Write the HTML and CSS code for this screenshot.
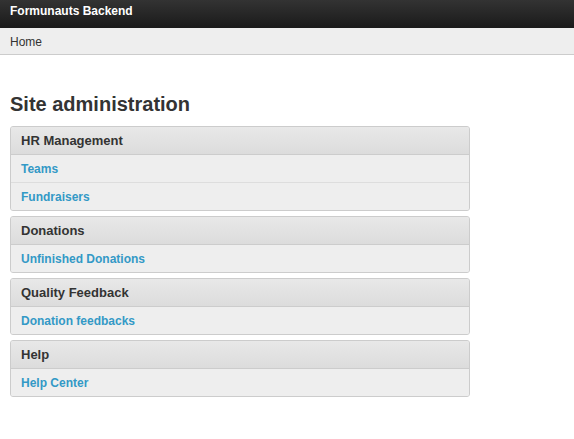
FILE: index.html
```html
<!DOCTYPE html>
<html>
<head>
<meta charset="utf-8">
<title>Site administration</title>
<link rel="stylesheet" href="styles.css">
</head>
<body>
<header class="topbar"><span class="brand">Formunauts Backend</span></header>
<nav class="breadcrumbs">Home</nav>
<main class="content">
  <h1 class="title">Site administration</h1>
  <div class="modules">
    <section class="module">
      <div class="caption">HR Management</div>
      <a class="row" href="#">Teams</a>
      <a class="row" href="#">Fundraisers</a>
    </section>
    <section class="module">
      <div class="caption">Donations</div>
      <a class="row" href="#">Unfinished Donations</a>
    </section>
    <section class="module">
      <div class="caption">Quality Feedback</div>
      <a class="row" href="#">Donation feedbacks</a>
    </section>
    <section class="module">
      <div class="caption">Help</div>
      <a class="row" href="#">Help Center</a>
    </section>
  </div>
</main>
</body>
</html>
```
FILE: styles.css
```css
* { box-sizing: border-box; }
body {
  margin: 0;
  font-family: "Liberation Sans", Arial, sans-serif;
  font-size: 12px;
  color: #333;
  background: #fff;
}
.topbar {
  height: 28px;
  background: linear-gradient(#333, #1a1a1a);
  padding: 3px 10px 0;
}
.brand {
  color: #fff;
  font-weight: bold;
  font-size: 12px;
  line-height: 16px;
}
.breadcrumbs {
  height: 27px;
  background: #eee;
  border-bottom: 1px solid #ccc;
  padding: 6px 10px 0;
  line-height: 16px;
  color: #333;
}
.content {
  padding: 37px 10px 0;
}
.title {
  margin: 0 0 10px;
  font-size: 20px;
  line-height: 24px;
  font-weight: bold;
  color: #333;
}
.modules {
  display: flex;
  flex-direction: column;
  gap: 5px;
  width: 460px;
}
.module {
  display: flex;
  flex-direction: column;
  border: 1px solid #ccc;
  border-radius: 3px;
  background: #eee;
  overflow: hidden;
}
.caption {
  height: 28px;
  padding: 6px 10px 0;
  font-size: 13px;
  font-weight: bold;
  line-height: 16px;
  color: #333;
  background: linear-gradient(#e8e8e8, #dcdcdc);
  border-bottom: 1px solid #ccc;
}
.row {
  height: 27px;
  padding: 6px 10px 0;
  line-height: 16px;
  font-weight: bold;
  color: #3399c6;
  text-decoration: none;
  background: #eee;
}
.row + .row {
  height: 28px;
  border-top: 1px solid #ddd;
}
```
